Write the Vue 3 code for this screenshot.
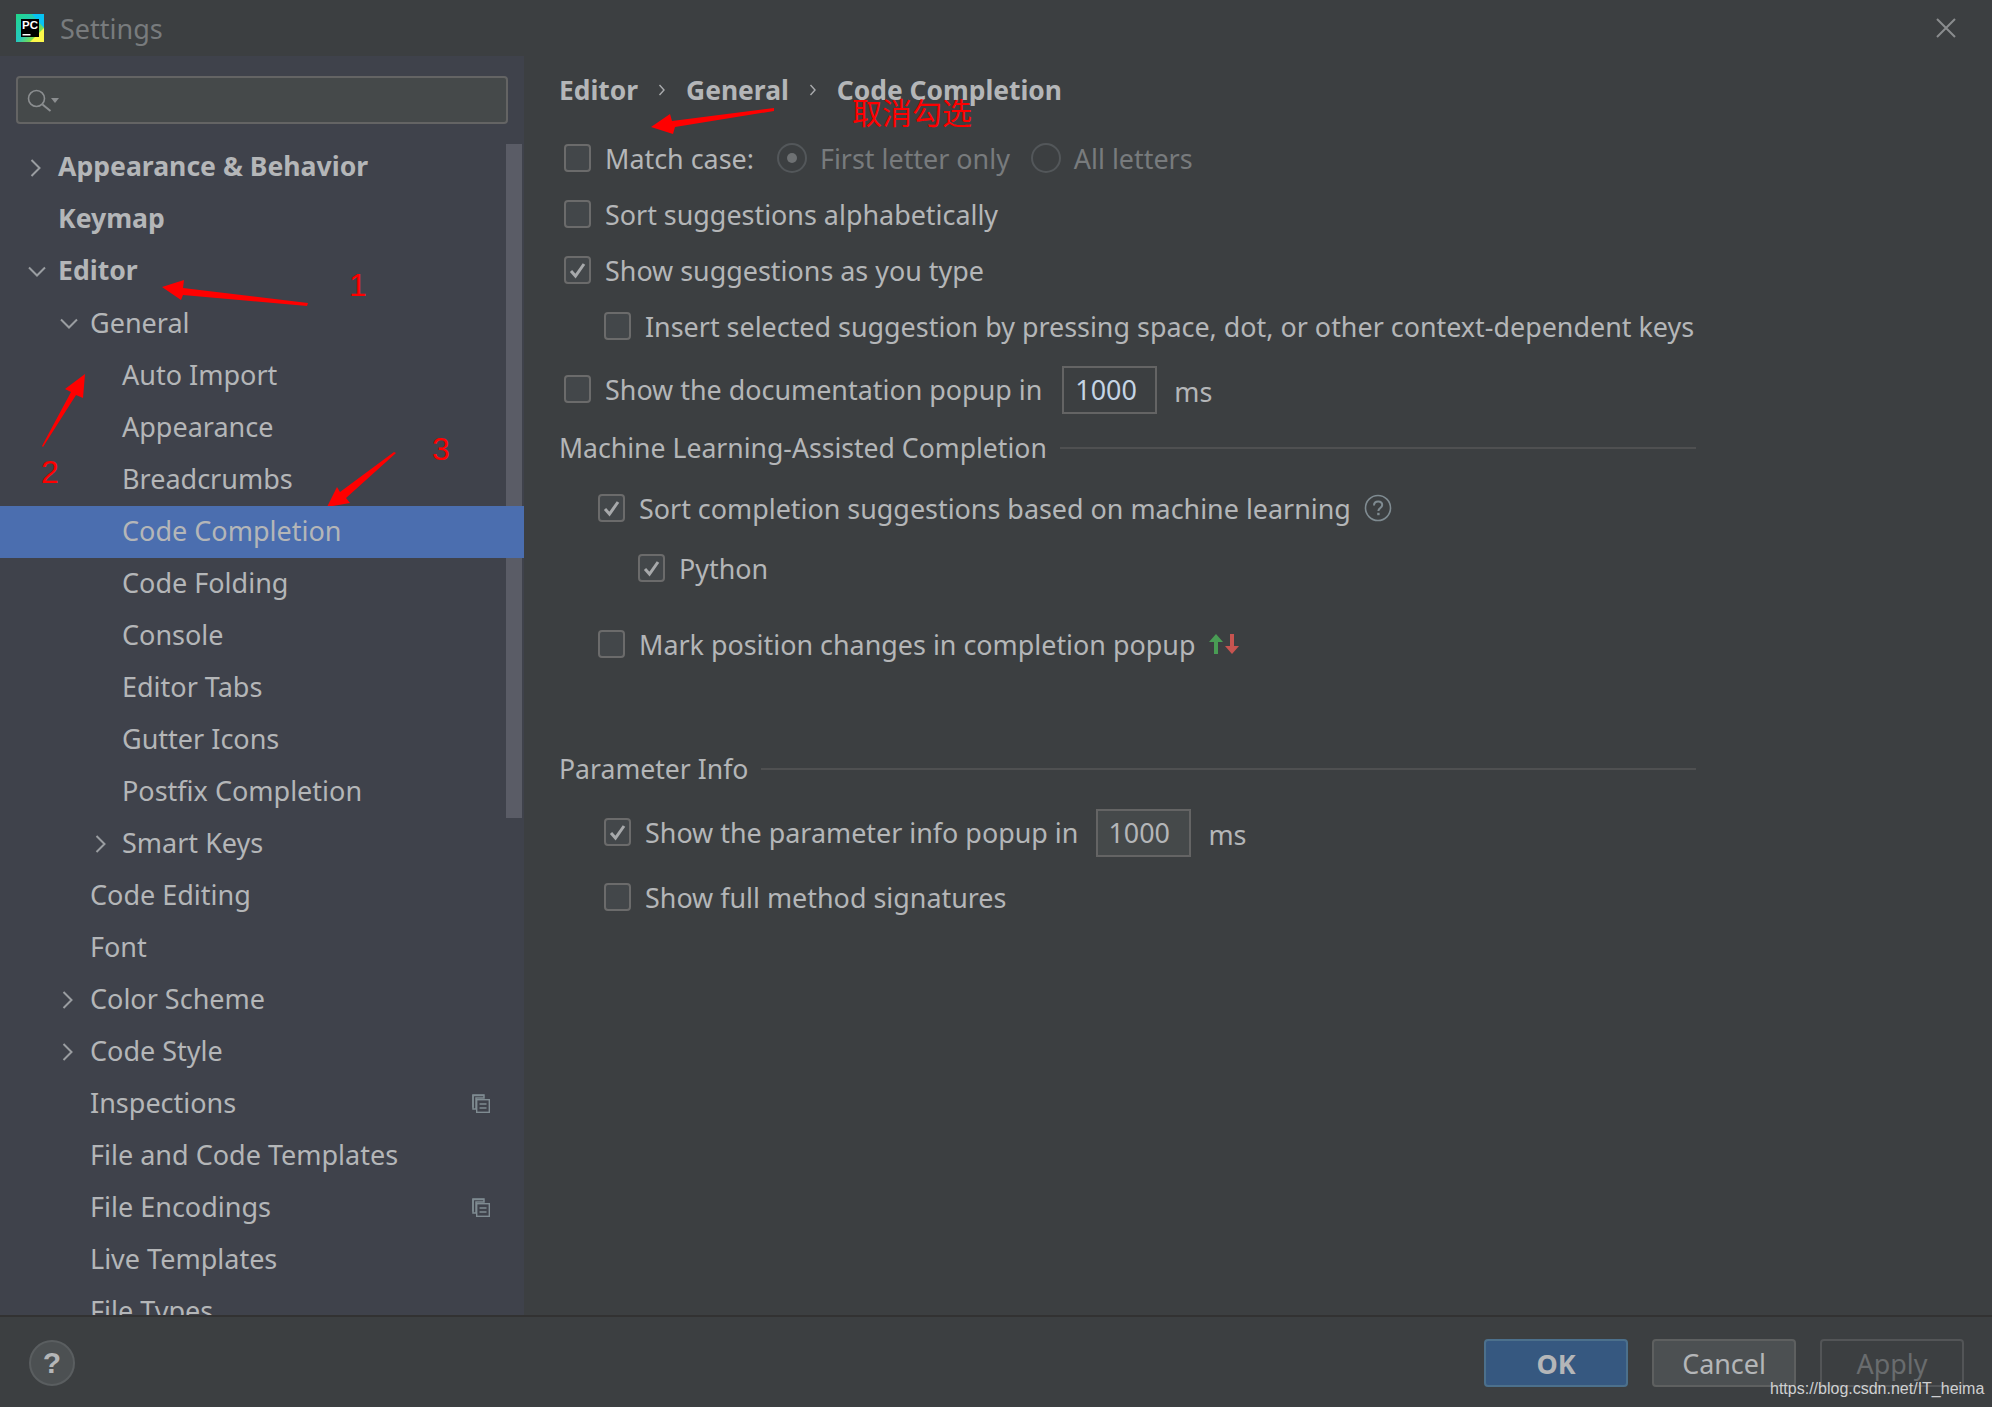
<template>
  <div class="dialog">
    <header class="titlebar">
      <svg class="logo" width="28" height="28" viewBox="0 0 28 28">
        <defs>
          <linearGradient id="pcLogo" x1="0" y1="0" x2="1" y2="1">
            <stop offset="0" stop-color="#21d789" />
            <stop offset="0.5" stop-color="#24c7c0" />
            <stop offset="0.75" stop-color="#7fe04a" />
            <stop offset="1" stop-color="#fcf84a" />
          </linearGradient>
        </defs>
        <rect width="28" height="28" fill="url(#pcLogo)" />
        <path d="M16 0h12v14z" fill="#07c3f2" />
        <path d="M28 14v14H14z" fill="#fcf84a" />
        <rect x="5" y="5" width="18" height="18" fill="#000" />
        <text x="6" y="15" class="logo-text">PC</text>
        <rect x="6.5" y="20" width="8" height="1.5" fill="#fff" />
      </svg>
      <span class="title">Settings</span>
      <svg class="close" width="20" height="20" viewBox="0 0 20 20">
        <path d="M1 1l18 18M19 1L1 19" stroke="#8a8c8e" stroke-width="2" fill="none" />
      </svg>
    </header>

    <div class="body">
      <aside class="sidebar">
        <div class="search">
          <svg width="32" height="26" viewBox="0 0 32 26">
            <circle cx="9.500" cy="10.500" r="8" fill="none" stroke="#8b8e90" stroke-width="1.6" />
            <path d="M15.500 16.500l8 6.500" stroke="#8b8e90" stroke-width="2" />
            <path d="M24 10h8l-4 5z" fill="#8b8e90" />
          </svg>
        </div>
        <div class="tree">
          <div
            v-for="item in tree"
            :key="item.label"
            class="node"
            :class="['level' + item.level, { bold: item.bold, active: item.active }]"
          >
            <svg v-if="item.arrow === 'right'" class="chevron" width="12" height="18" viewBox="0 0 12 18">
              <path d="M1.5 1l8 8-8 8" fill="none" stroke="#9a9da1" stroke-width="2" />
            </svg>
            <svg v-if="item.arrow === 'down'" class="chevron" width="18" height="12" viewBox="0 0 18 12">
              <path d="M1 1.5l8 8 8-8" fill="none" stroke="#9a9da1" stroke-width="2" />
            </svg>
            <span>{{ item.label }}</span>
            <svg v-if="item.copy" class="copy" width="18" height="19" viewBox="0 0 18 19">
              <path d="M12 1.5H1v12" fill="none" stroke="#7f8b91" stroke-width="1.5" />
              <path d="M1 1h11v3H4v11H1z" fill="none" stroke="#7f8b91" stroke-width="1.5" />
              <rect x="4.7" y="5.7" width="12.6" height="12.6" fill="none" stroke="#7f8b91" stroke-width="1.4" />
              <path d="M7.5 10h7M7.5 14h7" stroke="#7f8b91" stroke-width="1.6" />
            </svg>
          </div>
        </div>
        <div class="thumb"></div>
      </aside>

      <main class="content">
        <div class="crumbs">
          <span>Editor</span>
          <svg width="8" height="14" viewBox="0 0 8 14"><path d="M1.5 2l4.5 5-4.5 5" fill="none" stroke="#a9abad" stroke-width="1.4" /></svg>
          <span>General</span>
          <svg width="8" height="14" viewBox="0 0 8 14"><path d="M1.5 2l4.5 5-4.5 5" fill="none" stroke="#a9abad" stroke-width="1.4" /></svg>
          <span>Code Completion</span>
        </div>

        <div class="row match-row">
          <span class="box"></span>
          <span>Match case:</span>
          <span class="radio on"></span>
          <span class="muted">First letter only</span>
          <span class="radio second"></span>
          <span class="muted">All letters</span>
        </div>
        <div class="row sort-row">
          <span class="box"></span>
          <span>Sort suggestions alphabetically</span>
        </div>
        <div class="row show-row">
          <span class="box checked"><svg width="19" height="17" viewBox="0 0 19 17"><path d="M3 9l4.5 5L16 2" fill="none" stroke="#a7a9ab" stroke-width="3" /></svg></span>
          <span>Show suggestions as you type</span>
        </div>
        <div class="row insert-row indent-a">
          <span class="box"></span>
          <span>Insert selected suggestion by pressing space, dot, or other context-dependent keys</span>
        </div>
        <div class="row doc-row">
          <span class="box"></span>
          <span>Show the documentation popup in</span>
          <span class="field first">1000</span>
          <span class="unit">ms</span>
        </div>

        <div class="group ml-group">
          <span>Machine Learning-Assisted Completion</span>
          <i></i>
        </div>
        <div class="row ml-row indent-b">
          <span class="box checked"><svg width="19" height="17" viewBox="0 0 19 17"><path d="M3 9l4.5 5L16 2" fill="none" stroke="#a7a9ab" stroke-width="3" /></svg></span>
          <span>Sort completion suggestions based on machine learning</span>
          <svg class="help" width="28" height="28" viewBox="0 0 28 28">
            <circle cx="14" cy="14" r="12.5" fill="none" stroke="#7f8b91" stroke-width="1.6" />
            <path d="M10 11.5c0-2.6 2-4 4.200-4 2.300 0 4 1.400 4 3.500 0 3-3.800 3-3.800 6" fill="none" stroke="#7f8b91" stroke-width="2" />
            <rect x="13.200" y="18.800" width="2.400" height="2.400" fill="#7f8b91" />
          </svg>
        </div>
        <div class="row py-row indent-c">
          <span class="box checked"><svg width="19" height="17" viewBox="0 0 19 17"><path d="M3 9l4.5 5L16 2" fill="none" stroke="#a7a9ab" stroke-width="3" /></svg></span>
          <span>Python</span>
        </div>
        <div class="row mark-row indent-b">
          <span class="box"></span>
          <span>Mark position changes in completion popup</span>
          <svg class="updown" width="32" height="20" viewBox="0 0 32 20">
            <path d="M8 0l7 8h-5v12H6V8H1z" fill="#499c54" />
            <path d="M22 0h4v12h5l-7 8-7-8h5z" fill="#c75450" />
          </svg>
        </div>

        <div class="group param-group">
          <span>Parameter Info</span>
          <i></i>
        </div>
        <div class="row param-row indent-a">
          <span class="box checked"><svg width="19" height="17" viewBox="0 0 19 17"><path d="M3 9l4.5 5L16 2" fill="none" stroke="#a7a9ab" stroke-width="3" /></svg></span>
          <span>Show the parameter info popup in</span>
          <span class="field">1000</span>
          <span class="unit">ms</span>
        </div>
        <div class="row full-row indent-a">
          <span class="box"></span>
          <span>Show full method signatures</span>
        </div>
      </main>
    </div>

    <footer class="footer">
      <span class="help-btn">?</span>
      <div class="buttons">
        <button class="btn ok">OK</button>
        <button class="btn">Cancel</button>
        <button class="btn off">Apply</button>
      </div>
    </footer>

    <!-- hand drawn red marks over the screenshot -->
    <svg class="marks" width="1992" height="1407" viewBox="0 0 1992 1407">
      <polygon v-for="(pts, i) in arrows" :key="i" :points="pts" fill="#ff0000" />
    </svg>
    <span class="mark num n1">1</span>
    <span class="mark num n2">2</span>
    <span class="mark num n3">3</span>
    <span class="mark note">取消勾选</span>
    <span class="watermark">https://blog.csdn.net/IT_heima</span>
  </div>
</template>

<script setup>
const tree = [
  { label: 'Appearance & Behavior', level: 0, bold: true, arrow: 'right' },
  { label: 'Keymap', level: 0, bold: true },
  { label: 'Editor', level: 0, bold: true, arrow: 'down' },
  { label: 'General', level: 1, arrow: 'down' },
  { label: 'Auto Import', level: 2 },
  { label: 'Appearance', level: 2 },
  { label: 'Breadcrumbs', level: 2 },
  { label: 'Code Completion', level: 2, active: true },
  { label: 'Code Folding', level: 2 },
  { label: 'Console', level: 2 },
  { label: 'Editor Tabs', level: 2 },
  { label: 'Gutter Icons', level: 2 },
  { label: 'Postfix Completion', level: 2 },
  { label: 'Smart Keys', level: 2, arrow: 'right' },
  { label: 'Code Editing', level: 1 },
  { label: 'Font', level: 1 },
  { label: 'Color Scheme', level: 1, arrow: 'right' },
  { label: 'Code Style', level: 1, arrow: 'right' },
  { label: 'Inspections', level: 1, copy: true },
  { label: 'File and Code Templates', level: 1 },
  { label: 'File Encodings', level: 1, copy: true },
  { label: 'Live Templates', level: 1 },
  { label: 'File Types', level: 1 }
]

const arrows = [
  '162,287 184,280 183,288 308,303 307,306 183,295 181,300',
  '85,374 65,389 71,392 42,446 43,447 76,395 83,398',
  '327,507 337,487 340,492 394,452 396,453 346,498 350,503',
  '651,127 670,114 672,121 774,108 774,111 675,127 673,134'
]
</script>

<style>
html,
body {
  margin: 0;
  background: #3c3f41;
}
</style>

<style scoped>
.dialog {
  position: relative;
  width: 1992px;
  height: 1407px;
  overflow: hidden;
  display: flex;
  flex-direction: column;
  background: #3c3f41;
  color: #b4b6b8;
  font-family: "Noto Sans", "Noto Sans CJK SC", sans-serif;
  font-size: 26.9px;
}

.titlebar {
  height: 56px;
  flex: none;
  display: flex;
  align-items: center;
  padding-left: 16px;
  padding-right: 36px;
}

.logo-text {
  font-family: "Liberation Sans", sans-serif;
  font-size: 11.5px;
  font-weight: 700;
  fill: #fff;
}

.title {
  margin-left: 16px;
  color: #787b7d;
  font-size: 27px;
}

.close {
  margin-left: auto;
}

.body {
  flex: 1;
  min-height: 0;
  display: flex;
}

.sidebar {
  position: relative;
  width: 524px;
  flex: none;
  overflow: hidden;
  background: #3f424b;
}

.search {
  box-sizing: border-box;
  width: 492px;
  height: 48px;
  margin: 20px 0 18px 16px;
  padding: 10px 0 0 9px;
  background: #45494a;
  border: 2px solid #646464;
  border-radius: 4px;
}

.search svg {
  display: block;
}

.node {
  box-sizing: border-box;
  position: relative;
  height: 52px;
  padding-bottom: 4px;
  display: flex;
  align-items: center;
  white-space: nowrap;
  font-size: 27px;
}

.level0 {
  padding-left: 58px;
}

.level1 {
  padding-left: 90px;
}

.level2 {
  padding-left: 122px;
}

.node.bold {
  font-weight: 700;
  font-size: 26.6px;
}

.node.active {
  background: #4b6eaf;
  z-index: 1;
}

.chevron {
  position: absolute;
  top: 50%;
  transform: translateY(-50%);
}

.level0 .chevron {
  left: 30px;
}

.level0 .chevron[width="18"] {
  left: 28px;
}

.level1 .chevron {
  left: 62px;
}

.level1 .chevron[width="18"] {
  left: 60px;
}

.level2 .chevron {
  left: 95px;
}

.copy {
  position: absolute;
  left: 472px;
  top: 16px;
}

.thumb {
  position: absolute;
  left: 506px;
  top: 88px;
  width: 16px;
  height: 674px;
  background: #5a5c66;
}

.content {
  flex: 1;
  min-width: 0;
  padding-left: 35px;
}

.crumbs {
  height: 36px;
  margin-top: 16px;
  display: flex;
  align-items: center;
  gap: 20px;
  font-weight: 700;
  font-size: 26.4px;
}

.row {
  display: flex;
  align-items: center;
  height: 36px;
  padding-left: 5px;
  white-space: nowrap;
}

.box {
  box-sizing: border-box;
  flex: none;
  width: 27px;
  height: 28px;
  margin-right: 14px;
  display: flex;
  align-items: center;
  justify-content: center;
  background: #43474a;
  border: 2px solid #6b6b6b;
  border-radius: 4px;
}

.match-row {
  margin-top: 32px;
}

.sort-row,
.show-row,
.insert-row {
  margin-top: 20px;
}

.doc-row {
  margin-top: 27px;
}

.indent-a {
  padding-left: 45px;
}

.indent-b {
  padding-left: 39px;
}

.indent-c {
  padding-left: 79px;
}

.radio {
  box-sizing: border-box;
  width: 30px;
  height: 30px;
  margin: 0 13px 0 23px;
  flex: none;
  display: flex;
  align-items: center;
  justify-content: center;
  border: 2px solid #53575a;
  border-radius: 50%;
}

.radio.second {
  margin-left: 21px;
}

.radio.on::after {
  content: "";
  width: 10px;
  height: 10px;
  border-radius: 50%;
  background: #6e7173;
}

.muted {
  color: #787b7d;
}

.field {
  box-sizing: border-box;
  width: 95px;
  height: 48px;
  margin-left: 18px;
  padding-left: 10px;
  line-height: 44px;
  background: #45494a;
  border: 2px solid #646464;
  position: relative;
  top: 1px;
}

.field.first {
  margin-left: 20px;
  padding-left: 11px;
  background: #3c3f41;
  color: #c5d4e4;
}

.unit {
  margin-left: 17px;
  position: relative;
  top: 2px;
}

.group {
  display: flex;
  align-items: center;
  width: 1137px;
  height: 36px;
  white-space: nowrap;
  font-size: 26.6px;
}

.group i {
  flex: 1;
  height: 2px;
  margin-left: 13px;
  background: #4f5051;
}

.ml-group {
  margin-top: 23px;
}

.ml-row {
  margin-top: 24px;
}

.py-row {
  margin-top: 24px;
}

.mark-row {
  margin-top: 40px;
}

.param-group {
  margin-top: 89px;
}

.param-row {
  margin-top: 27px;
}

.full-row {
  margin-top: 29px;
}

.help {
  margin-left: 13px;
}

.updown {
  margin-left: 13px;
}

.footer {
  box-sizing: border-box;
  height: 92px;
  flex: none;
  display: flex;
  align-items: center;
  justify-content: space-between;
  padding: 2px 28px 0 29px;
  border-top: 2px solid #323232;
}

.help-btn {
  box-sizing: border-box;
  width: 46px;
  height: 46px;
  display: flex;
  align-items: center;
  justify-content: center;
  font-family: "Liberation Sans", sans-serif;
  font-weight: 700;
  font-size: 30px;
  background: #4c5052;
  border: 2px solid #5a5e60;
  border-radius: 50%;
}

.buttons {
  display: flex;
  gap: 24px;
}

.btn {
  box-sizing: border-box;
  width: 144px;
  height: 48px;
  padding: 0;
  font: inherit;
  color: #b4b6b8;
  background: #4c5052;
  border: 2px solid #5e6060;
  border-radius: 4px;
}

.btn.ok {
  font-weight: 700;
  background: #365880;
  border-color: #4c708c;
}

.btn.off {
  color: #696c6e;
  background: transparent;
  border-color: #535557;
}

.marks {
  position: absolute;
  left: 0;
  top: 0;
  pointer-events: none;
}

.mark {
  position: absolute;
  color: #ff0000;
  line-height: 1;
}

.num {
  font-family: "Liberation Sans", sans-serif;
  font-size: 32px;
}

.n1 {
  left: 349px;
  top: 269px;
}

.n2 {
  left: 41px;
  top: 456px;
}

.n3 {
  left: 432px;
  top: 433px;
}

.note {
  left: 852px;
  top: 96px;
  font-family: "Noto Sans CJK SC", sans-serif;
  font-size: 30px;
}

.watermark {
  position: absolute;
  left: 1770px;
  top: 1380px;
  font-family: "Liberation Sans", sans-serif;
  font-size: 16px;
  color: #cfd0d1;
}
</style>
